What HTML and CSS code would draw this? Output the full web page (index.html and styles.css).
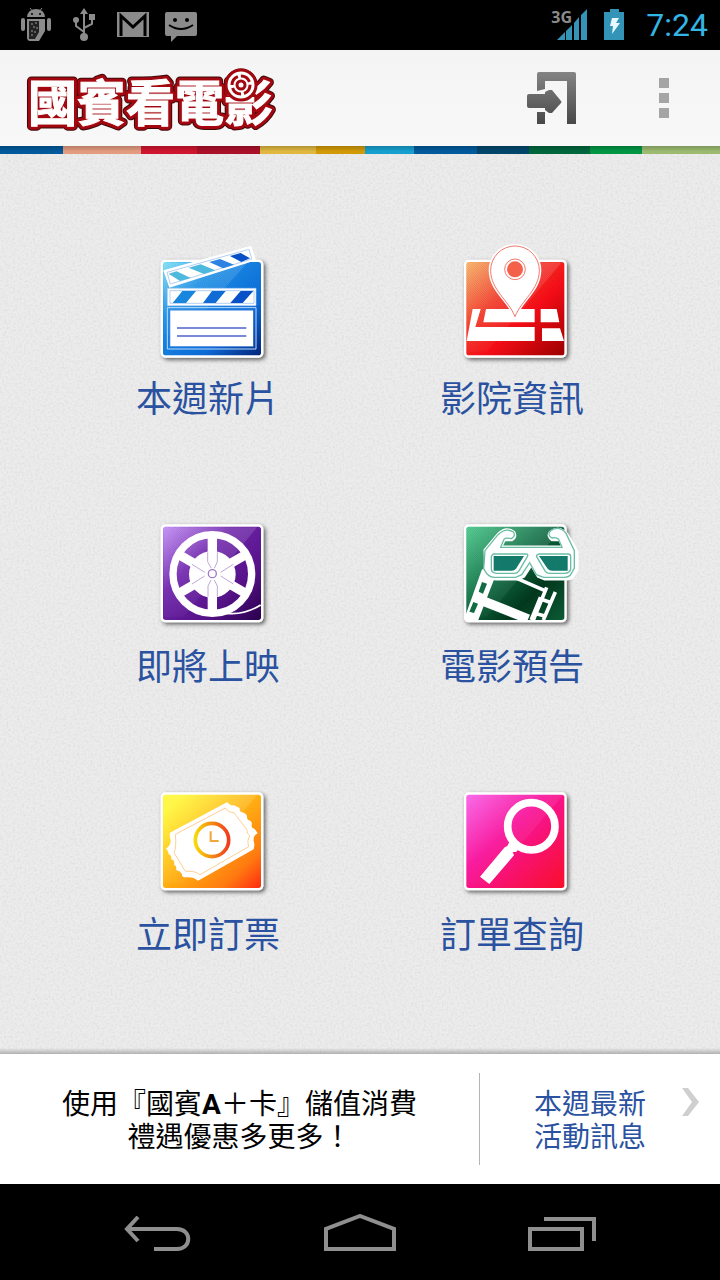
FILE: index.html
```html
<!DOCTYPE html>
<html lang="zh-Hant">
<head>
    <meta charset="UTF-8">
    <meta name="viewport" content="width=device-width, initial-scale=1.0">
    <title>國賓看電影</title>
    <link rel="stylesheet" href="styles.css">
</head>
<body>
    <!-- shared gradients and patterns -->
    <svg class="defs" width="0" height="0" aria-hidden="true">
        <defs>
            <filter id="paper" x="0" y="0" width="100%" height="100%">
                <feTurbulence type="fractalNoise" baseFrequency="0.45" numOctaves="2" seed="4"/>
                <feColorMatrix type="matrix" values="0 0 0 0 0.3  0 0 0 0 0.3  0 0 0 0 0.3  0.3 0 0 0 -0.12"/>
            </filter>
            <filter id="tileShadow" x="-20%" y="-20%" width="140%" height="140%">
                <feDropShadow dx="6" dy="6" stdDeviation="6" flood-color="#000" flood-opacity="0.6"/>
            </filter>
            <pattern id="hatch" width="7" height="7" patternUnits="userSpaceOnUse">
                <path d="M0 0l7 7" stroke="#000" stroke-opacity="0.16" stroke-width="2"/>
            </pattern>
            <linearGradient id="shine" x1="0" y1="0" x2="0" y2="1">
                <stop offset="0" stop-color="#fff" stop-opacity="0.14"/>
                <stop offset="1" stop-color="#fff" stop-opacity="0.03"/>
            </linearGradient>
            <linearGradient id="blue" x1="0" y1="0" x2="1" y2="1">
                <stop offset="0" stop-color="#7be6ff"/>
                <stop offset="0.3" stop-color="#1b93ee"/>
                <stop offset="0.7" stop-color="#0d6fe0"/>
                <stop offset="1" stop-color="#03257f"/>
            </linearGradient>
            <linearGradient id="red" x1="0" y1="0" x2="1" y2="1">
                <stop offset="0" stop-color="#ffb25c"/>
                <stop offset="0.35" stop-color="#fb3a27"/>
                <stop offset="0.6" stop-color="#ff0d18"/>
                <stop offset="1" stop-color="#a30000"/>
            </linearGradient>
            <linearGradient id="purple" x1="0" y1="0" x2="1" y2="1">
                <stop offset="0" stop-color="#c68cff"/>
                <stop offset="0.35" stop-color="#7426b4"/>
                <stop offset="0.7" stop-color="#5a148f"/>
                <stop offset="1" stop-color="#2b0050"/>
            </linearGradient>
            <linearGradient id="green" x1="0" y1="0" x2="1" y2="1">
                <stop offset="0" stop-color="#3ecb86"/>
                <stop offset="0.4" stop-color="#0f7548"/>
                <stop offset="0.7" stop-color="#023a1e"/>
                <stop offset="1" stop-color="#0d5f38"/>
            </linearGradient>
            <linearGradient id="orange" x1="0" y1="0" x2="1" y2="1">
                <stop offset="0.1" stop-color="#fff62c"/>
                <stop offset="0.5" stop-color="#ffae12"/>
                <stop offset="0.8" stop-color="#ff7a10"/>
                <stop offset="1" stop-color="#ff2a10"/>
            </linearGradient>
            <linearGradient id="pink" x1="0" y1="0" x2="1" y2="1">
                <stop offset="0" stop-color="#ff60ee"/>
                <stop offset="0.4" stop-color="#ff14a0"/>
                <stop offset="1" stop-color="#ff0f2c"/>
            </linearGradient>
            <linearGradient id="clockRing" x1="0" y1="0" x2="1" y2="0">
                <stop offset="0" stop-color="#f8d808"/>
                <stop offset="1" stop-color="#f03c1c"/>
            </linearGradient>
            <linearGradient id="exitGray" gradientUnits="userSpaceOnUse" x1="0" y1="0" x2="0" y2="54">
                <stop offset="0" stop-color="#858585"/>
                <stop offset="1" stop-color="#474747"/>
            </linearGradient>
        </defs>
    </svg>

    <div class="status-bar">
        <div class="notifications">
            <svg width="30" height="34" viewBox="0 0 30 34" fill="#8b8b8b">
                <path d="M6 9a9 8 0 0 1 18 0z"/>
                <path d="M9 0l3 4M21 0l-3 4" stroke="#8b8b8b"/>
                <circle cx="11" cy="6" r="1" fill="#000"/><circle cx="19" cy="6" r="1" fill="#000"/>
                <rect x="0" y="10" width="4" height="13" rx="2"/><rect x="26" y="10" width="4" height="13" rx="2"/>
                <path d="M6 11h18v12l-6 10H9q-3 0-3-4z"/>
                <path d="M8 13h10v11l-4 7H8z" fill="#222"/>
                <path d="M10 16h2M14 15h2M12 19h2M15 20h2M10 23h2M13 24h2M10 27h2" stroke="#999" stroke-width="1"/>
            </svg>
            <svg width="22" height="34" viewBox="0 0 22 34">
                <path d="M11 4v24M11 24L3 18v-6M11 20l8-4V9" fill="none" stroke="#8b8b8b" stroke-width="2"/>
                <path d="M11 0l4 6H7z" fill="#8b8b8b"/>
                <circle cx="11" cy="29" r="4" fill="#8b8b8b"/><circle cx="3" cy="12" r="3" fill="#8b8b8b"/>
                <rect x="16" y="6" width="6" height="6" fill="#8b8b8b"/>
            </svg>
            <svg width="32" height="26" viewBox="0 0 32 26">
                <path d="M0 0h32v25H0z" fill="#8b8b8b"/>
                <path d="M4 24V4l12 11L28 4v20" fill="none" stroke="#000" stroke-width="3"/>
            </svg>
            <svg class="message" width="32" height="30" viewBox="0 0 32 30">
                <path d="M2 0h28q2 0 2 2v20q0 2-2 2H12l-6 6v-6H2q-2 0-2-2V2q0-2 2-2z" fill="#8b8b8b"/>
                <circle cx="10" cy="8" r="2" fill="#000"/><circle cx="22" cy="8" r="2" fill="#000"/>
                <path d="M4 13q12 8 24 0" fill="none" stroke="#000" stroke-width="2"/>
            </svg>
        </div>
        <div class="system">
            <div class="signal">
                <span class="network">3G</span>
                <svg width="31" height="32" viewBox="0 0 31 32" fill="#3494b8">
                    <path d="M0 31l8-8v8zM9 22l6-6v15H9zM17 14l5-6v23h-5zM24 6l6-6v31h-6z"/>
                </svg>
            </div>
            <svg width="20" height="32" viewBox="0 0 20 32">
                <path d="M6 0h9v3h5v28H0V3h6z" fill="#3494b8"/>
                <path d="M8 9h7l-3 5h4L8 25l1-8H6z" fill="#e8f8ff"/>
            </svg>
            <span class="clock">7:24</span>
        </div>
    </div>

    <header class="app-bar">
        <h1 class="logo">
            <svg width="256" height="68" viewBox="0 0 256 68" role="img" aria-label="國賓看電影">
                <defs>
                    <g id="logoShape">
                        <text x="4" y="57" class="logo-text">國賓看電影</text>
                        <circle cx="217" cy="21" r="12"/>
                    </g>
                </defs>
                <use href="#logoShape" fill="#3a0b0b" stroke="#3a0b0b" stroke-width="9" stroke-linejoin="round"/>
                <use href="#logoShape" fill="#a3070f" stroke="#a3070f" stroke-width="7" stroke-linejoin="round"/>
                <use href="#logoShape" fill="#fff" stroke="#fff" stroke-width="1"/>
                <circle cx="217" cy="21" r="15" fill="#fff" stroke="#a3070f" stroke-width="3"/>
                <circle cx="217" cy="21" r="9" fill="none" stroke="#a3070f" stroke-width="3" stroke-dasharray="11 3"/>
                <circle cx="217" cy="21" r="4" fill="none" stroke="#a3070f" stroke-width="3"/>
            </svg>
        </h1>
        <div class="actions">
            <button type="button" aria-label="登入">
                <svg width="50" height="54" viewBox="0 0 50 54" fill="url(#exitGray)">
                    <path d="M12 1h35q2 0 2 2v50h-9V10H18v8l-8 2V3q0-2 2-2zM10 41h8v12h-8z"/>
                    <path d="M2 23h16v-2l4-2h3l9 11q1 1 0 2l-9 10h-3l-4-3v-2H2q-2 0-2-2V25q0-2 2-2z"/>
                </svg>
            </button>
            <button type="button" aria-label="更多">
                <svg width="10" height="40" viewBox="0 0 10 40" fill="#a5a5a5">
                    <path d="M0 0h10v10H0zM0 15h10v10H0zM0 30h10v10H0z"/>
                </svg>
            </button>
        </div>
    </header>
    <div class="stripe"></div>

    <main>
        <svg class="texture" width="100%" height="100%" aria-hidden="true"><rect width="100%" height="100%" filter="url(#paper)"/></svg>
        <nav class="menu">
            <a href="#new">
                <svg viewBox="-6 0 480 390">
                    <rect x="92" y="74" width="308" height="294" rx="14" fill="#fff" filter="url(#tileShadow)"/>
                    <rect x="99" y="81" width="294" height="280" rx="8" fill="url(#blue)"/>
                    <rect x="99" y="81" width="294" height="280" rx="8" fill="url(#hatch)"/>
                    <path d="M101 84h250L160 300H101z" fill="url(#shine)"/>
                    <path d="M100 106L364 32l14 44-260 82z" fill="#fff"/>
                    <path d="M111 112L357 43l8 29-244 75z" fill="#fff" stroke="#8cb7ee" stroke-width="2"/>
                    <path d="M116 116l24-7 42 20-32 9zM176 98l36-10 44 18-34 11z" fill="#4cb9dd"/>
                    <path d="M238 81l32-9 42 17-33 11z" fill="#2c83e2"/>
                    <path d="M300 63l32-9 28 16-26 11z" fill="#0750c8"/>
                    <path d="M112 160h266v52H112z" fill="#fff" stroke="#a5cbf4" stroke-width="2"/>
                    <path d="M120 167h252v38H120z" fill="#fff" stroke="#8cb7ee" stroke-width="2"/>
                    <path d="M157 168h41l-30 36h-40z" fill="#1786dc"/>
                    <path d="M246 168h41l-30 36h-38z" fill="#106cd4"/>
                    <path d="M332 168h38l-32 36h-37z" fill="#0750c8"/>
                    <path d="M112 218h266v124H112z" fill="none" stroke="#b9dcff" stroke-width="3"/>
                    <path d="M123 228h244v104H123z" fill="#fff" stroke="#fff" stroke-width="5"/>
                    <path d="M119 225h252v110H119z" fill="none" stroke="#3c80df" stroke-width="2"/>
                    <path d="M141 279h208M141 303h208" stroke="#5064cc" stroke-width="5"/>
                </svg>
                <span>本週新片</span>
            </a>
            <a href="#theaters">
                <svg viewBox="6 0 480 390">
                    <rect x="102" y="74" width="308" height="294" rx="14" fill="#fff" filter="url(#tileShadow)"/>
                    <rect x="109" y="81" width="294" height="280" rx="8" fill="url(#red)"/>
                    <rect x="109" y="81" width="294" height="280" rx="8" fill="url(#hatch)"/>
                    <path d="M110 82h285L170 350H110z" fill="url(#shine)"/>
                    <path d="M128 222h24l-16 54h178v42H110zM168 222h146v40H160zM332 222h48l8 40h-56zM336 280h54l12 38h-66z" fill="#fff"/>
                    <path d="M255 246C236 196 180 166 180 106a75 75 0 0 1 150 0c0 60-56 90-75 140z" fill="#fff" stroke="#fff" stroke-width="8"/>
                    <path d="M255 245C236 196 182 164 182 106a73 73 0 0 1 146 0c0 58-54 90-73 139z" fill="#fff" stroke="#f2776e" stroke-width="3"/>
                    <circle cx="255" cy="103" r="31" fill="#fff" stroke="#f2776e" stroke-width="3"/>
                    <circle cx="255" cy="103" r="24" fill="#f4604a"/>
                </svg>
                <span>影院資訊</span>
            </a>
            <a href="#coming">
                <svg viewBox="-6 -21 480 390">
                    <rect x="92" y="43" width="308" height="294" rx="14" fill="#fff" filter="url(#tileShadow)"/>
                    <rect x="99" y="50" width="294" height="280" rx="8" fill="url(#purple)"/>
                    <rect x="99" y="50" width="294" height="280" rx="8" fill="url(#hatch)"/>
                    <path d="M101 52h280L160 320H101z" fill="url(#shine)"/>
                    <circle cx="247" cy="193" r="70" fill="#fff"/>
                    <g fill="none" stroke="#fff">
                        <circle cx="247" cy="192" r="118" stroke-width="22"/>
                        <path d="M247 80v224M150 136l194 112M150 248l194-112" stroke-width="28"/>
                        <path d="M290 310q52 6 102-25" stroke-width="5"/>
                    </g>
                    <g fill="#fff" stroke="#a277c4" stroke-width="2">
                        <path d="M233 127v28l11 20M262 127v28l-9 20M186 163l38 24M186 222l38-24M310 163l-38 24M310 222l-38-24M234 260v-32l9-18M262 260v-32l-9-18" fill="none"/>
                        <circle cx="247" cy="191" r="12" stroke-width="4"/>
                    </g>
                </svg>
                <span>即將上映</span>
            </a>
            <a href="#trailers">
                <svg viewBox="6 -21 480 390">
                    <rect x="102" y="43" width="308" height="294" rx="14" fill="#fff" filter="url(#tileShadow)"/>
                    <rect x="109" y="50" width="294" height="280" rx="8" fill="url(#green)"/>
                    <rect x="109" y="50" width="294" height="280" rx="8" fill="url(#hatch)"/>
                    <path d="M110 50h290L170 320H110z" fill="url(#shine)"/>
                    <!-- film strip -->
                    <path d="M156 178h48l-60 154h-36v-20z" fill="#fff"/>
                    <path d="M166 260l134 54-8 18h-22l-118-46z" fill="#fff"/>
                    <path d="M262 206l88 38M350 232l-40 98M376 246l-36 84M334 268l30 10M314 310l30 8" fill="none" stroke="#fff" stroke-width="11"/>
                    <path d="M332 262l-28 68" stroke="#fff" stroke-width="12"/>
                    <path d="M156 216l15 5-12 30-13-6zM130 276l14 5-12 28-14-4z" fill="#0f6c43"/>
                    <!-- 3D glasses -->
                    <path d="M164 120L204 72q24-24 48-6 9 14-6 24l-22 0-10 20h184l-10-20-22 0q-16-12-6-24 26-20 50 4l32 54v56l-14 22q-5 6-18 6h-66l-20-8-20-34-22 34-18 8h-66q-12 0-22-10l-10-16z" fill="#fff" stroke="#fff" stroke-width="7"/>
                    <path d="M165 122L204 74q24-22 46-8 8 12-6 20-18-4-22 2l-10 24h184l-10-24q-8-8-20-4-16-10-4-22 24-16 45 6l26 54v52l-12 22q-6 6-18 6h-62l-22-8-20-36-24 36-18 8h-64q-12 0-22-10l-10-16z" fill="#fff" stroke="#6abda5" stroke-width="4"/>
                    <path d="M190 132h98q8 0 4 8l-26 44q-4 6-14 6h-52q-16 0-16-15v-36zM328 132h86q8 0 8 8v38q-4 12-18 12h-44q-10 0-14-6l-26-44q-2-6 8-8z" fill="#fff" stroke="#6abda5" stroke-width="4"/>
                    <path d="M191 138h91l-24 38q-4 6-14 6h-53zM327 138h86v44h-46q-10 0-14-6z" fill="#148070"/>
                    <path d="M191 138h91l-24 38q-4 6-14 6h-53zM327 138h86v44h-46q-10 0-14-6z" fill="url(#hatch)"/>
                </svg>
                <span>電影預告</span>
            </a>
            <a href="#booking">
                <svg viewBox="-6 -27 480 390">
                    <rect x="92" y="37" width="308" height="294" rx="14" fill="#fff" filter="url(#tileShadow)"/>
                    <rect x="99" y="44" width="294" height="280" rx="8" fill="url(#orange)"/>
                    <path d="M101 45h280L160 310H101z" fill="url(#shine)"/>
                    <path d="M120 158L292 66q8 12 20 10l17 8q-2 14 12 14 8 2 10 10-2 12 10 14 6 4 4 14-2 8 8 10 4 4 10 14-14 6-12 24 4 8 0 24L204 302q-14-12-36-10-14 0-12-10-6-10-18-12 4-12-6-16 4-12-8-16 2-12-8-16 0-10-8-16 14-8 14-26-4-8-2-22z" fill="#fff"/>
                    <path d="M136 163L286 84q8 14 26 14l38 50q0 14 10 20-10 10-4 32L210 284q-14-12-44-10l-34-56q8-16 4-55z" fill="none" stroke="#ffcf93" stroke-width="3"/>
                    <circle cx="246" cy="180" r="50" fill="#fff" stroke="url(#clockRing)" stroke-width="11"/>
                    <path d="M242 154v29h24" fill="none" stroke="#f1a53a" stroke-width="6"/>
                </svg>
                <span>立即訂票</span>
            </a>
            <a href="#orders">
                <svg viewBox="6 -27 480 390">
                    <rect x="102" y="37" width="308" height="294" rx="14" fill="#fff" filter="url(#tileShadow)"/>
                    <rect x="109" y="44" width="294" height="280" rx="8" fill="url(#pink)"/>
                    <rect x="109" y="44" width="294" height="280" rx="8" fill="url(#hatch)" opacity="0.6"/>
                    <path d="M110 44h290L170 314H110z" fill="url(#shine)" opacity="0.6"/>
                    <circle cx="304" cy="139" r="71" fill="none" stroke="#fff" stroke-width="23"/>
                    <path d="M238 186l26 24-6 6-10 0 4 10-74 86-28-22 74-88 8-4z" fill="#fff"/>
                </svg>
                <span>訂單查詢</span>
            </a>
        </nav>
    </main>

    <footer class="banner">
        <p class="promo">使用『國賓<b>A</b>＋卡』儲值消費<br>禮遇優惠多更多！</p>
        <a class="news" href="#news">
            <span>本週最新<br>活動訊息</span>
            <svg width="18" height="32" viewBox="0 0 18 32"><path d="M0 0h6l11 14L6 28H0l10-14z" fill="#cfcfcf"/></svg>
        </a>
    </footer>

    <div class="nav-bar">
        <button type="button" aria-label="返回">
            <svg width="68" height="36" viewBox="0 0 68 36" fill="none" stroke="#8f8f8f" stroke-width="4">
                <path d="M14 1L3 13l11 12M3 13h50c15 0 15 20 0 20H30"/>
            </svg>
        </button>
        <button type="button" aria-label="主畫面">
            <svg width="72" height="38" viewBox="0 0 72 38" fill="none" stroke="#8f8f8f" stroke-width="4">
                <path d="M2 35V15L36 2l34 13v20z"/>
            </svg>
        </button>
        <button type="button" aria-label="最近使用">
            <svg width="68" height="36" viewBox="0 0 68 36" fill="none" stroke="#8f8f8f" stroke-width="4">
                <path d="M2 13h52v20H2zM16 3h50v22"/>
            </svg>
        </button>
    </div>
</body>
</html>
```

FILE: styles.css
```css
* {
    box-sizing: border-box;
}
body {
    margin: 0;
    min-height: 100vh;
    display: flex;
    flex-direction: column;
    font-family: Roboto, "Noto Sans CJK TC", sans-serif;
    background-color: #ececec;
}
svg {
    display: block;
}
button {
    padding: 0;
    border: none;
    background: none;
    cursor: pointer;
}
a {
    color: #2a52a0;
    text-decoration: none;
}
.defs {
    position: absolute;
}

/* status bar */
.status-bar {
    height: 50px;
    padding: 0 12px 0 21px;
    display: flex;
    justify-content: space-between;
    align-items: center;
    background-color: #000;
}
.notifications {
    display: flex;
    align-items: center;
    gap: 20px;
}
.notifications svg:nth-child(2) {
    margin: 0 2px;
}
.notifications .message {
    margin: 3px 0 0 -4px;
}
.system {
    display: flex;
    align-items: center;
    gap: 16px;
}
.signal {
    position: relative;
}
.network {
    position: absolute;
    top: -1px;
    left: -6px;
    font-family: "Open Sans", sans-serif;
    font-size: 16px;
    font-weight: bold;
    line-height: 18px;
    color: #8b8b8b;
}
.clock {
    margin-left: 6px;
    font-size: 32px;
    line-height: 50px;
    color: #33b5e5;
}

/* title bar */
.app-bar {
    height: 96px;
    padding: 0 51px 0 24px;
    display: flex;
    justify-content: space-between;
    align-items: center;
    background: linear-gradient(#f4f4f4, #f8f8f8);
}
.logo {
    margin: 0;
}
.logo-text {
    font-family: "Noto Sans CJK TC", sans-serif;
    font-size: 49px;
    font-weight: bold;
}
.actions {
    display: flex;
    align-items: center;
    gap: 82px;
}
.stripe {
    height: 8px;
    background:
        linear-gradient(rgba(0, 0, 0, 0.2), rgba(0, 0, 0, 0) 70%),
        linear-gradient(to right,
            #005a9c 8.75%, #e49c80 8.75% 19.6%, #d0142f 19.6% 27.4%,
            #ab1029 27.4% 36.1%, #e0b83f 36.1% 43.9%, #d29a06 43.9% 50.7%,
            #16a0d0 50.7% 57.5%, #005a9c 57.5% 66.2%, #00466c 66.2% 73.5%,
            #00663c 73.5% 81.9%, #009644 81.9% 89.2%, #9cbb70 89.2%);
}

/* main menu */
main {
    position: relative;
    flex: 1;
    padding: 81px 56px 90px;
    background: linear-gradient(to top, rgba(0, 0, 0, 0.25), rgba(0, 0, 0, 0) 6px);
}
.texture {
    position: absolute;
    top: 0;
    left: 0;
}
.menu {
    position: relative;
    display: grid;
    grid-template-columns: 1fr 1fr;
    row-gap: 79px;
}
.menu a {
    display: flex;
    flex-direction: column;
    align-items: center;
    gap: 11px;
    font-size: 36px;
    line-height: 48px;
}
.menu svg {
    width: 160px;
    height: 130px;
}

/* bottom banner */
.banner {
    display: grid;
    grid-template-columns: 2fr 1fr;
    align-items: center;
    height: 130px;
    font-size: 28px;
    line-height: 33px;
    background-color: #fff;
}
.promo {
    margin: 0;
    padding: 15px 0 11px;
    text-align: center;
    color: #000;
    border-right: 1px solid #b4b4b4;
}
.news {
    padding: 4px 20px 0 0;
    display: flex;
    justify-content: flex-end;
    align-items: flex-start;
    gap: 36px;
}

/* system buttons */
.nav-bar {
    height: 96px;
    padding: 0 124px 28px 124px;
    display: flex;
    justify-content: space-between;
    align-items: flex-end;
    background-color: #000;
}
```
